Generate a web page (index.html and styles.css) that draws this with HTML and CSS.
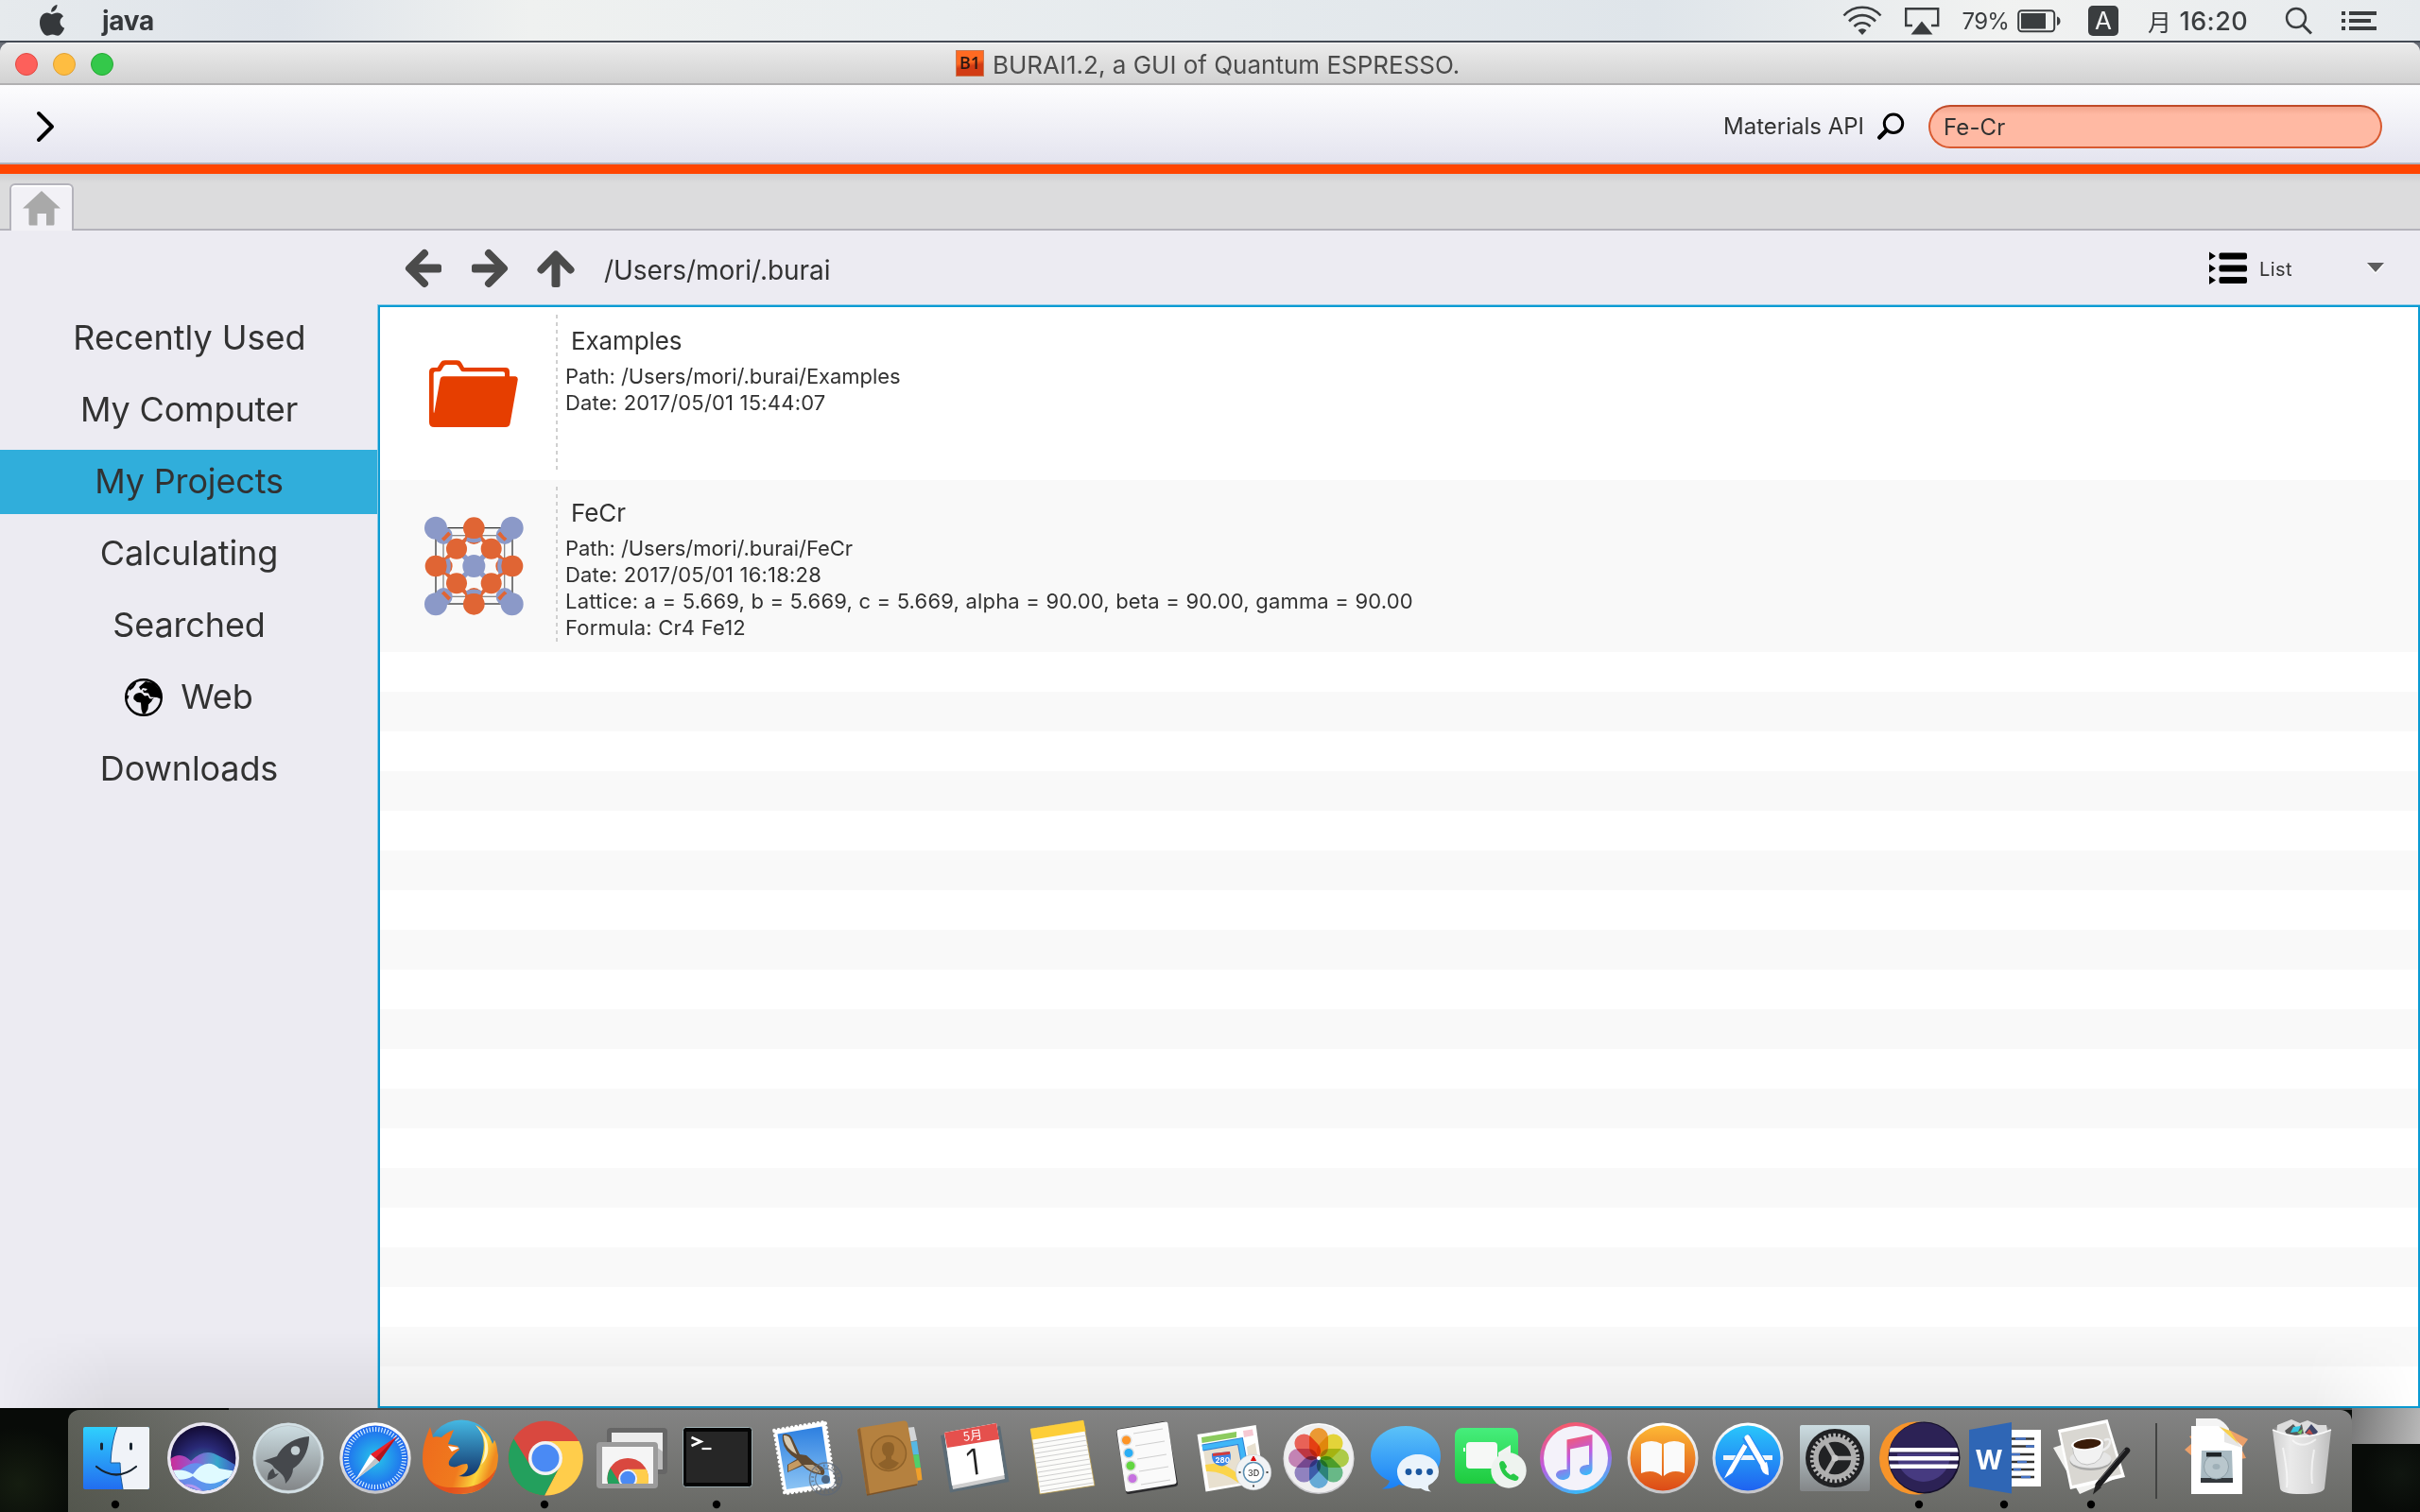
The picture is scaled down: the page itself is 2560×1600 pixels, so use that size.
FILE: index.html
```
<!DOCTYPE html>
<html lang="ja">
<head>
<meta charset="utf-8">
<title>BURAI1.2</title>
<link rel="stylesheet" href="styles.css">
</head>
<body>
<div class="desktop">
  <header class="menubar">
    <svg class="apple" width="28" height="34" viewBox="0 0 28 34"><path fill="#35383b" d="M19.500 1c.3 3.600-2.800 7.800-6.300 7.700C12.800 5.200 16 1.400 19.500 1zM13.700 11.200c1.500 0 3.400-1.700 6.100-1.600 1.900.1 4.500 1 6.200 3.600-5.200 3.300-4.400 10.200 1.200 12.500-1.300 3.400-4.200 8-7 8-2.200 0-3-1.300-5.700-1.300s-3.600 1.300-5.700 1.300C5.400 33.700 1 26.700 1 20.300 1 13.300 5 9.700 8.700 9.600c2.200 0 3.900 1.600 5 1.600z"/></svg>
    <b class="app-name">java</b>
    <div class="status">
      <svg class="wifi" width="42" height="32" viewBox="0 0 42 32"><g fill="none" stroke="#3a3d3f" stroke-width="2.600"><path d="M1.500 10.500C12-1.200 30-1.200 40.500 10.500"/><path d="M7 16.500C15 8 27 8 35 16.500"/><path d="M12.500 22C17.500 17 24.500 17 29.500 22"/></g><path fill="#3a3d3f" d="M21 31l-4.500-5q4.500-3.500 9 0z"/></svg>
      <svg class="airplay" width="38" height="32" viewBox="0 0 38 32"><path fill="none" stroke="#3a3d3f" stroke-width="2.400" d="M9 21H2.200V3.200h34V21H29"/><path fill="#3a3d3f" d="M19 16.500L30.500 30.500H7.500z"/></svg>
      <span class="percent">79%</span>
      <svg class="battery" width="46" height="26" viewBox="0 0 46 26"><rect x="1.200" y="2.200" width="38" height="22" rx="3.500" fill="none" stroke="#3a3d3f" stroke-width="2"/><rect x="4" y="5" width="26" height="16.500" fill="#3a3d3f"/><path fill="#3a3d3f" d="M42 8.500q3.500 1 3.500 4.800T42 18z"/></svg>
      <span class="input-source">A</span>
      <span class="clock"><span class="day">月</span> <span class="time">16:20</span></span>
      <svg class="spotlight" width="30" height="30" viewBox="0 0 30 30"><circle cx="12" cy="12" r="10" fill="none" stroke="#3a3d3f" stroke-width="2.400"/><path d="M19 19.500L28 28.500" stroke="#3a3d3f" stroke-width="3"/></svg>
      <svg class="notif" width="37" height="22" viewBox="0 0 37 22"><path fill="#3a3d3f" d="M0 1h4v4H0zM8 1h29v4H8zM0 9h4v4H0zM8 9h23v4H8zM0 17h4v4H0zM8 17h29v4H8z"/></svg>
    </div>
  </header>

  <main class="window">
    <div class="titlebar">
      <div class="lights"><i class="close"></i><i class="min"></i><i class="max"></i></div>
      <div class="title"><span class="logo">B1</span><span>BURAI1.2, a GUI of Quantum ESPRESSO.</span></div>
    </div>
    <div class="toolbar">
      <svg class="chevron" width="22" height="34" viewBox="0 0 22 34"><path d="M4 3L18 17L4 31" fill="none" stroke="#000" stroke-width="4" stroke-linecap="round" stroke-linejoin="round"/></svg>
      <span class="api">Materials API</span>
      <svg class="mag" width="30" height="30" viewBox="0 0 30 30"><circle cx="18" cy="11.800" r="9.700" fill="none" stroke="#000" stroke-width="3"/><path d="M10.500 19L3.200 26.500" stroke="#000" stroke-width="4.500" stroke-linecap="round"/></svg>
      <div class="search">Fe-Cr</div>
    </div>
    <div class="accent"></div>
    <div class="tabs">
      <div class="tab"><svg width="40" height="38" viewBox="0 0 40 38"><path fill="#a9a9a9" d="M20 0L40 18.500H33.500V35q0 1.500-1.500 1.500H25V24H15.500V36.500H8q-1.500 0-1.500-1.500V18.500H0z"/></svg></div>
    </div>
    <div class="body">
      <nav class="sidebar">
        <div class="item recent">Recently Used</div>
        <div class="item">My Computer</div>
        <div class="item active">My Projects</div>
        <div class="item">Calculating</div>
        <div class="item">Searched</div>
        <div class="item web"><svg width="40" height="40" viewBox="0 0 40 40"><circle cx="20" cy="20" r="18.800" fill="#ecebf2" stroke="#000" stroke-width="2.400"/><path d="M5 10l6-6 1 1.500-3 4.500-4 3zM2 18h2.500l-1 3.500H2zM12 16q4-1.500 6-.5l3 3 3.500-.5 1.500 3 3 2.500-4 4-.5 5-3 5h-2.500l-1.500-5-.5-7-4-.5-3.500-3q-1-4 2.500-6zM15 9l7-6 9 2 7 9 1 8-5-2-7-.500-2-4-5-.5-1-3 3 1 2-2-5-1-2 2.500zM25 21l3 .500 3-1-3 3z"/></svg><span>Web</span></div>
        <div class="item">Downloads</div>
      </nav>
      <section class="explorer">
        <div class="pathbar">
          <svg class="nav" width="40" height="42" viewBox="0 0 40 42"><path d="M21 5L5 21L21 37" fill="none" stroke="#4b4b4b" stroke-width="8" stroke-linecap="round" stroke-linejoin="round"/><rect x="8" y="16.500" width="31" height="9" rx="2.500" fill="#4b4b4b"/></svg>
          <svg class="nav" width="40" height="42" viewBox="0 0 40 42"><path d="M19 5L35 21L19 37" fill="none" stroke="#4b4b4b" stroke-width="8" stroke-linecap="round" stroke-linejoin="round"/><rect x="1" y="16.500" width="31" height="9" rx="2.500" fill="#4b4b4b"/></svg>
          <svg class="nav" width="40" height="42" viewBox="0 0 40 42"><path d="M4.500 22.500L20 6.500L35.500 22.500" fill="none" stroke="#4b4b4b" stroke-width="8" stroke-linecap="round" stroke-linejoin="round"/><rect x="15.500" y="8" width="9" height="33" rx="2.500" fill="#4b4b4b"/></svg>
          <span class="path">/Users/mori/.burai</span>
          <svg class="listicon" width="40" height="36" viewBox="0 0 40 36"><path d="M0 .5l7 4.500-7 4.500zM0 13.500l7 4.500-7 4.500zM0 26l7 4.500-7 4.500z"/><rect x="10.500" y="1.500" width="29.500" height="7" rx="2"/><rect x="10.500" y="14.500" width="29.500" height="7" rx="2"/><rect x="10.500" y="27" width="29.500" height="7" rx="2"/></svg>
          <span class="view">List</span>
          <svg class="caret" width="18" height="12" viewBox="0 0 18 12"><path d="M0 2h18l-9 10z" fill="#fff"/><path d="M0 0h18l-9 10z" fill="#5d5d5f"/></svg>
        </div>
        <div class="list">
          <article class="row">
            <div class="thumb"><svg class="folder" width="98" height="74" viewBox="36 30 294 222"><path fill="#e63e00" d="M56 57H68L78 41Q82 34 92 34H130Q140 34 144 41L153 57H284Q297 57 297 70V85H316Q325 87 323 97L299 233Q297 246 284 246H58Q42 246 42 230V71Q42 57 56 57z"/><path fill="#fff" d="M56 76Q56 70 62 70H72Q78 70 81 65L88 53Q91 48 97 48H126Q132 48 135 53L142 65Q145 70 150 70H276Q282 70 282 76V85H88Q79 85 77 94L58 200Q56 202 56 196z"/></svg></div>
            <div class="info">
              <h3>Examples</h3>
              <p>Path: /Users/mori/.burai/Examples</p>
              <p class="num">Date: 2017/05/01 15:44:07</p>
            </div>
          </article>
          <article class="row alt">
            <div class="thumb"><svg class="mol" width="108" height="108" viewBox="20 525 324 324">
              <rect x="86" y="590" width="194" height="194" fill="none" stroke="#888" stroke-width="4"/>
              <rect x="62" y="566" width="243" height="241" fill="none" stroke="#222" stroke-width="3.500"/>
              <g fill="#8b99c8"><circle cx="87" cy="590" r="28"/><circle cx="281" cy="590" r="28"/><circle cx="87" cy="784" r="28"/><circle cx="281" cy="784" r="28"/></g>
              <g stroke="#e06534" stroke-width="12"><path d="M84 604l22-22M284 604l-22-22M84 770l22 22M284 770l-22 22"/></g>
              <g fill="#e06534"><circle cx="183" cy="590" r="28"/><circle cx="183" cy="784" r="28"/><circle cx="87" cy="687" r="28"/><circle cx="280" cy="687" r="28"/></g>
              <g stroke="#e06534" stroke-width="12"><path d="M128 631l40-40M238 631l-40-40M128 743l40 40M238 743l-40 40M128 631l-40 40M128 743l-40-40M238 631l40 40M238 743l40-40"/></g>
              <g stroke="#8b99c8" stroke-width="13" fill="none"><path d="M160 602q23 8 46 0M160 772q23-8 46 0M99 664q8 23 0 46M268 664q-8 23 0 46"/></g>
              <g stroke="#8b99c8" stroke-width="16"><path d="M148 652l70 70M218 652l-70 70"/></g>
              <g fill="#e06534"><circle cx="183" cy="566" r="34"/><circle cx="183" cy="808" r="34"/><circle cx="62" cy="687" r="34"/><circle cx="305" cy="687" r="34"/><circle cx="128" cy="632" r="33"/><circle cx="238" cy="632" r="33"/><circle cx="128" cy="742" r="33"/><circle cx="238" cy="742" r="33"/></g>
              <g fill="#8b99c8"><circle cx="62" cy="566" r="36"/><circle cx="304" cy="566" r="36"/><circle cx="62" cy="808" r="36"/><circle cx="304" cy="808" r="36"/><circle cx="183" cy="687" r="36"/></g>
            </svg></div>
            <div class="info">
              <h3>FeCr</h3>
              <p>Path: /Users/mori/.burai/FeCr</p>
              <p class="num">Date: 2017/05/01 16:18:28</p>
              <p class="num">Lattice: a = 5.669, b = 5.669, c = 5.669, alpha = 90.00, beta = 90.00, gamma = 90.00</p>
              <p class="num">Formula: Cr4 Fe12</p>
            </div>
          </article>
          <div class="stripes"></div>
        </div>
      </section>
    </div>
  </main>

  <footer class="dock-area">
    <div class="dock">
      <svg width="91" height="108" viewBox="77 22 91 108">
        <defs><linearGradient id="fb" x1="0" y1="0" x2="0" y2="1"><stop offset="0" stop-color="#2fd0fd"/><stop offset="1" stop-color="#226df0"/></linearGradient><linearGradient id="rim" x1="0" y1="0" x2="0" y2="1"><stop offset="0" stop-color="#fff"/><stop offset="1" stop-color="#c4c4c8"/></linearGradient></defs>
        <rect x="88" y="40" width="70" height="66" rx="2" fill="url(#fb)"/><path d="M124 40H156q2 0 2 2V104q0 2-2 2H130Q127 92 127 78H117Q118 55 124 40z" fill="#f0f3f8"/><path d="M124 40Q118 55 117 78H127Q127 92 130 106" fill="none" stroke="#1a5a9a" stroke-width="1"/><path d="M107.500 58v5M138.500 58v5" stroke="#17232e" stroke-width="3" stroke-linecap="round"/><path d="M102 82Q123 99 144 82" fill="none" stroke="#17232e" stroke-width="2.200" stroke-linecap="round"/><circle cx="122" cy="122" r="4.200"/></svg>
      <svg width="91" height="108" viewBox="168 22 91 108">
        <defs><radialGradient id="si" cx=".5" cy=".65" r=".65"><stop offset="0" stop-color="#2b8aa8"/><stop offset=".5" stop-color="#2a2a78"/><stop offset="1" stop-color="#120a32"/></radialGradient><linearGradient id="sw" x1="0" y1="0" x2="1" y2="0"><stop offset="0" stop-color="#f02ca0"/><stop offset=".4" stop-color="#a060e0"/><stop offset=".7" stop-color="#38b8d8"/><stop offset="1" stop-color="#4a60d8"/></linearGradient><clipPath id="sc"><circle cx="215" cy="73" r="34.500"/></clipPath></defs>
        <circle cx="215" cy="73" r="38" fill="#e9e6f0"/><g clip-path="url(#sc)"><circle cx="215" cy="73" r="35" fill="url(#si)"/><path d="M178 76Q190 64 202 76Q214 64 226 68Q240 74 252 82V112H178z" fill="url(#sw)" opacity=".85"/><path d="M178 98Q205 66 222 86T252 98V112H178z" fill="#5a9cf4" opacity=".8"/><path d="M180 87Q192 83 204 90Q218 71 232 84L250 87V92Q240 94 232 98Q218 104 204 92Q192 99 180 93z" fill="#dffaff"/><path d="M190 104Q204 98 214 110" stroke="#e7a0f0" stroke-width="3" fill="none" opacity=".6"/></g></svg>
      <svg width="91" height="108" viewBox="259 22 91 108">
        <defs><linearGradient id="lp" x1="0" y1="0" x2="0" y2="1"><stop offset="0" stop-color="#ccdde2"/><stop offset="1" stop-color="#838688"/></linearGradient></defs>
        <circle cx="305" cy="73" r="37.500" fill="#b9c2c6"/><circle cx="305" cy="73" r="36" fill="none" stroke="#d3e0e5" stroke-width="2.500"/><circle cx="305" cy="73" r="34" fill="url(#lp)"/><path fill="#45484c" d="M327 50C312 51 299 59 293 71L278 76Q288 78 290 83L296 88Q302 93 302 100Q310 92 310 84C321 77 327 64 327 50zM289 84q-6 3-6 12q8-1 12-7l-4 1z"/><circle cx="312.500" cy="65" r="4.800" fill="#c4d0d4"/></svg>
      <svg width="91" height="108" viewBox="350 22 91 108">
        <defs><radialGradient id="sf"><stop offset="0" stop-color="#27c6ea"/><stop offset="1" stop-color="#1f66ee"/></radialGradient></defs>
        <circle cx="397" cy="73" r="37.700" fill="url(#rim)"/><circle cx="397" cy="73" r="34.500" fill="url(#sf)"/><circle cx="397" cy="73" r="30.500" fill="none" stroke="#d5eeff" stroke-width="5" stroke-dasharray="1.200 1.990"/><path d="M420 50L392 69L401 77z" fill="#e8222b"/><path d="M420 50L397 73L401 77z" fill="#b3141c"/><path d="M376 96L392 69L401 77z" fill="#fff"/><path d="M376 96L397 73L401 77z" fill="#bfc4c8"/></svg>
      <svg width="91" height="108" viewBox="441 22 91 108">
        <defs><linearGradient id="fx" x1="0" y1="0" x2="1" y2=".3"><stop offset="0" stop-color="#ee6a1c"/><stop offset=".6" stop-color="#f07a1e"/><stop offset=".85" stop-color="#fbd63c"/><stop offset="1" stop-color="#f08a20"/></linearGradient><linearGradient id="fg" x1="0" y1="0" x2="0" y2="1"><stop offset="0" stop-color="#45b9e4"/><stop offset=".8" stop-color="#14386e"/></linearGradient></defs>
        <circle cx="488" cy="69" r="36.500" fill="url(#fg)"/><path fill="url(#fx)" d="M455 40C450 52 447 60 447 74C447 96 465 111 487 111C510 111 527 96 527 70C526 66 526 58 523 54L521 58C518 48 512 42 503 38C514 50 513 62 509 76C506 90 497 94 485 92C492 90 497 84 494 79C486 79 483 84 478 82C471 80 476 72 486 64L484 60L474 58L480 43C474 45 470 48 467 51C463 50 460 50 458 51z"/><path fill="#e0431c" opacity=".75" d="M450 90C460 106 475 104 490 104C505 103 518 96 525 84C520 102 505 111 487 111C470 111 456 103 450 90z"/><path fill="#fff5c0" d="M503 38C514 50 516 62 509 80C520 70 519 50 503 38z"/><path fill="#fff" d="M474 60l12 2-8 4z"/></svg>
      <svg width="91" height="108" viewBox="532 22 91 108">
        <g id="chrome"><circle cx="577" cy="73" r="39.500" fill="#d9483f"/><path fill="#ffcd4b" d="M577 55H612.500A39.500 39.500 0 0 1 576 112.500L592 82A18 18 0 0 0 577 55z"/><path fill="#23a05d" d="M543.500 52.500A39.500 39.500 0 0 0 576 112.500L592 82A18 18 0 0 1 561 81z"/><circle cx="577" cy="73" r="18" fill="#f3f3f3"/><circle cx="577" cy="73" r="14.500" fill="#4a8af4"/></g><circle cx="576" cy="122" r="4.200"/></svg>
      <svg width="91" height="108" viewBox="623 22 91 108">
        <defs><clipPath id="rc"><rect x="637" y="61" width="54" height="39"/></clipPath></defs>
        <rect x="642" y="41" width="64" height="49" rx="4" fill="#666"/><rect x="647" y="46" width="54" height="39" fill="#ececec"/><path d="M690 58L701 66V85H690z" fill="#bbb"/><rect x="631" y="56" width="65" height="49" rx="4" fill="#9b9b9b"/><rect x="637" y="61" width="54" height="39" fill="#f5f5f5"/><g clip-path="url(#rc)"><use href="#chrome" transform="translate(346.800 54.500) scale(.55)"/></g></svg>
      <svg width="91" height="108" viewBox="714 22 91 108">
        <rect x="722.500" y="40.500" width="73" height="63" rx="3" fill="#050505" stroke="#9fb0b4" stroke-width="1"/><rect x="726" y="45" width="65" height="54" fill="#262626"/><path d="M731.500 51L741.500 55.500L731.500 60" fill="none" stroke="#fff" stroke-width="2.600"/><path d="M742.500 63h10" stroke="#fff" stroke-width="2.200"/><circle cx="758" cy="122" r="4.200"/></svg>
      <svg width="91" height="108" viewBox="805 22 91 108">
        <defs><linearGradient id="ml" x1="0" y1="0" x2="0" y2="1"><stop offset="0" stop-color="#2c7fe0"/><stop offset="1" stop-color="#8cc4f4"/></linearGradient></defs>
        <path d="M819 43.500L873 34.500L883 103L830 110.500z" fill="#fff" stroke="#fff" stroke-width="3.600" stroke-linecap="round" stroke-dasharray=".1 4.600"/><path d="M822.500 47.500L869.500 39.500L878.500 99.500L832 106z" fill="url(#ml)"/><path fill="#5f4a33" d="M828 48Q836 46 839 54L846 69L853 70L862 78Q876 84 871 91Q856 89 849 81L833 88L833 80L843 74Q826 64 828 48z"/><path fill="#d8cbb4" d="M829 49Q835 48 837 55L843 69Q829 62 829 49z"/><path fill="#c59a62" d="M834 80L844 75L848 80L834 87z"/><path fill="#b9a486" d="M850 80L860 80Q870 86 868 89Q856 87 850 80z"/><g fill="none" stroke="#5d6878" opacity=".7"><circle cx="873.500" cy="95" r="17" stroke-width="1.500"/><circle cx="873.500" cy="95" r="11" stroke-width="1.200"/><circle cx="873.500" cy="95" r="14" stroke-width="3" stroke-dasharray="1.500 3"/></g><circle cx="873.500" cy="95.500" r="4.500" fill="#4c6684"/></svg>
      <svg width="91" height="108" viewBox="896 22 91 108">
        <path d="M958 41L967 40L970 54L960 56z" fill="#d4d6d8"/><path d="M960 56L970 55L972 69L962 70z" fill="#56b8e4"/><path d="M962 70L972 69L974 83L964 84z" fill="#50cf6a"/><path d="M964 84L974 83L975.500 96L964 98z" fill="#f0a02a"/><path d="M909 41L956 33.500Q959 33 960 36L971 98Q971 101 969 101L919 112Q917 112 916.500 110L907 43z" fill="#b5813f"/><path d="M907 43L910 41L920 111Q917 113 916.500 110z" fill="#8f6230"/><path d="M917 112L970 101" stroke="#7a5228" stroke-width="1.500"/><circle cx="940" cy="68" r="18.500" fill="#ad7938" stroke="#8e6129" stroke-width="1.500"/><path d="M940 56q6 0 6 7 0 5-3 8l0 3 8 4q-5 7-11 7-7 0-11-6l8-5v-3q-4-3-4-8 0-7 7-7z" fill="#8e6129"/></svg>
      <svg width="91" height="108" viewBox="987 22 91 108">
        <path d="M995 49L1058 39L1067.500 98L1005 109.500z" fill="#5d6c76"/><path d="M999 46L1054 36L1063 95L1008 106z" fill="#cfcfcf"/><path d="M999 46L1054 36L1062.500 91L1007 102z" fill="#fff"/><path d="M999 46L1054 36L1057 53L1002 62z" fill="#e5504d"/><text transform="translate(1019.500 55) rotate(-8)" class="cal-m">5月</text><text transform="translate(1023.500 91.500) rotate(-7)" class="cal-d">1</text></svg>
      <svg width="91" height="108" viewBox="1078 22 91 108">
        <path d="M1090 42L1146 33L1158 102L1100 111z" fill="#fcfcfa" stroke="#b79a4a" stroke-width=".8"/><path d="M1090 42L1146 33L1148.500 44.500L1092 53.500z" fill="#fdce38"/><path d="M1093 58l56-9M1094 63l56-9M1095 68l56-9M1095 73l56-9M1096 78l56-9M1097 83l56-9M1098 88l56-9M1098 93l56-9M1099 98l56-9M1100 103l56-9M1101 108l56-9" stroke="#c9c9c9" stroke-width=".9"/></svg>
      <svg width="91" height="108" viewBox="1169 22 91 108">
        <path d="M1184 45L1232 37L1243 100L1194 108z" fill="#2c2c2e" stroke="#2c2c2e" stroke-width="6" stroke-linejoin="round"/><path d="M1184 45L1233 37L1242 98L1193 106z" fill="#fafafa" stroke="#fafafa" stroke-width="5" stroke-linejoin="round"/><path d="M1199 47l31-5M1201 60l31-5M1203 74l31-5M1205 87l31-5M1207 101l31-5" stroke="#cfcfcf" stroke-width="1"/><g stroke="#ddd" stroke-width="1.500"><circle cx="1191.500" cy="54" r="5.300" fill="#fd9426"/><circle cx="1194" cy="67.500" r="5.300" fill="#2aaef5"/><circle cx="1196" cy="81" r="5.300" fill="#62d640"/><circle cx="1198" cy="94.500" r="5.300" fill="#c672e0"/></g></svg>
      <svg width="91" height="108" viewBox="1260 22 91 108">
        <path d="M1266.500 48L1328.600 38L1337 98L1275.500 108.500z" fill="#fff"/><path d="M1271 51L1308 45V51L1271.500 57z" fill="#8ccb5e"/><path d="M1315 44L1325 42.500L1326 49L1316 51z" fill="#f6c8d2"/><path d="M1273 65L1310 59L1316 99L1279 105z" fill="#e8e0cf"/><path d="M1319 61L1328 57L1334 96L1323 97z" fill="#e8e0cf"/><path d="M1275 80L1290 78Q1300 82 1310 90L1310 99Q1292 86 1276 87z" fill="#fbd44a"/><path d="M1272 62L1312 55L1317 82" fill="none" stroke="#2f7fd0" stroke-width="7"/><path d="M1272 62L1312 55L1317 82" fill="none" stroke="#3fb6f8" stroke-width="5"/><path d="M1282 68L1301 66Q1305 78 1293 81.500Q1281 80 1282 68z" fill="#3c87e8"/><path d="M1283 68L1301 66L1301 69L1283 71z" fill="#d43a3a"/><text x="1285.500" y="78" class="shield">280</text><circle cx="1326" cy="88" r="18.700" fill="#f1f3f5" stroke="#c9ccd0" stroke-width=".6"/><circle cx="1326" cy="88" r="10.500" fill="#fff" stroke="#5d8fb0" stroke-width="1.500"/><path d="M1326 71l2.500 4.500h-5z" fill="#e01010" stroke="#e01010"/><path d="M1310.500 88h2M1339.500 88h2M1326 101.500v2" stroke="#444" stroke-width="2"/><text x="1320" y="91.500" class="threed">3D</text></svg>
      <svg width="91" height="108" viewBox="1351 22 91 108">
        <circle cx="1395" cy="73.500" r="37.500" fill="url(#rim)"/><circle cx="1395" cy="73.500" r="36" fill="#efeff0"/><g class="petals" transform="translate(1395 73)"><rect x="-10" y="-32" width="20" height="31" rx="10" fill="#fba336"/><rect x="-10" y="-32" width="20" height="31" rx="10" fill="#f3e13c" transform="rotate(45)"/><rect x="-10" y="-32" width="20" height="31" rx="10" fill="#b9d94c" transform="rotate(90)"/><rect x="-10" y="-32" width="20" height="31" rx="10" fill="#6fc590" transform="rotate(135)"/><rect x="-10" y="-32" width="20" height="31" rx="10" fill="#6cb6e4" transform="rotate(180)"/><rect x="-10" y="-32" width="20" height="31" rx="10" fill="#9a8bcb" transform="rotate(225)"/><rect x="-10" y="-32" width="20" height="31" rx="10" fill="#d08cbf" transform="rotate(270)"/><rect x="-10" y="-32" width="20" height="31" rx="10" fill="#f8685c" transform="rotate(315)"/></g><circle cx="1395" cy="73" r="2" fill="#fff"/></svg>
      <svg width="91" height="108" viewBox="1442 22 91 108">
        <defs><linearGradient id="ms" x1="0" y1="0" x2="0" y2="1"><stop offset="0" stop-color="#5cc3f8"/><stop offset="1" stop-color="#1a80f6"/></linearGradient></defs>
        <path fill="url(#ms)" d="M1487 39C1508 39 1524 53 1524 71S1508 102 1487 102Q1483 102 1480 101Q1473 106 1462 105.500Q1469 102 1470 97C1458 92 1450 82 1450 71C1450 53 1466 39 1487 39z"/><path fill="#eaf3fb" d="M1500 69C1513 69 1522 77 1522 87.500Q1522 96 1511 102Q1510 106 1514 108.500Q1507 108 1503 105C1488 107 1478 98 1478 87.500C1478 77 1488 69 1500 69z"/><g fill="#1a57a0"><circle cx="1490" cy="87.500" r="3.400"/><circle cx="1501" cy="87.500" r="3.400"/><circle cx="1512.500" cy="87.500" r="3.400"/></g></svg>
      <svg width="91" height="108" viewBox="1533 22 91 108">
        <defs><linearGradient id="ft" x1="0" y1="0" x2="0" y2="1"><stop offset="0" stop-color="#46ee7c"/><stop offset="1" stop-color="#1ecb3e"/></linearGradient></defs>
        <rect x="1539" y="41" width="67" height="59" rx="8" fill="url(#ft)"/><rect x="1551" y="56" width="33" height="28" rx="4" fill="#f6f8f6"/><path d="M1585 67L1598 59V80L1585 74z" fill="#f0f4f0"/><path d="M1549 62v4" stroke="#fff" stroke-width="2"/><circle cx="1596" cy="86" r="18.700" fill="#eef3ef"/><path d="M1586 79q1-4 5-2.500l3 5q0 2-2 3 2 4 6 6.500 2-2 3.500-1.500l5 3.500q0 4-4 4Q1588 94 1586 79z" fill="#27c946"/></svg>
      <svg width="91" height="108" viewBox="1624 22 91 108">
        <defs><linearGradient id="it" x1=".3" y1="0" x2=".6" y2="1"><stop offset="0" stop-color="#fb5a62"/><stop offset=".5" stop-color="#c05ae0"/><stop offset="1" stop-color="#31bffb"/></linearGradient></defs>
        <circle cx="1667" cy="73" r="38" fill="url(#it)"/><circle cx="1667" cy="73" r="34" fill="#f4f2fa"/><path fill="url(#it)" d="M1657.500 53.500L1684.500 48V84C1684.500 89 1681 91 1677 91S1671 88 1671 86C1671 82 1675 80 1681 80V59.500L1661 63.500V89C1661 94 1657 96 1653 96S1646 93 1646 91C1646 87 1650 85 1657.500 85z"/></svg>
      <svg width="91" height="108" viewBox="1715 22 91 108">
        <defs><linearGradient id="ib" x1="0" y1="0" x2="0" y2="1"><stop offset="0" stop-color="#fdb935"/><stop offset="1" stop-color="#dc4a17"/></linearGradient></defs>
        <circle cx="1759" cy="73" r="37.500" fill="url(#rim)"/><circle cx="1759" cy="73" r="34.500" fill="url(#ib)"/><path d="M1736 58Q1747 52 1758 58V92Q1749 84 1736 89zM1760 58Q1771 52 1782 58V89Q1769 84 1760 92z" fill="#fafafa"/></svg>
      <svg width="91" height="108" viewBox="1806 22 91 108">
        <defs><linearGradient id="as" x1="0" y1="0" x2="0" y2="1"><stop offset="0" stop-color="#29c6fb"/><stop offset="1" stop-color="#1f62f0"/></linearGradient></defs>
        <circle cx="1849" cy="73" r="37.500" fill="url(#rim)"/><circle cx="1849" cy="73" r="34.500" fill="url(#as)"/><path d="M1823 70H1875V75H1823z" fill="#eef4fa"/><path d="M1844.500 59L1829 86L1826 92L1832 88L1847.500 61z" fill="#fff" stroke="#2a86f4" stroke-width="3"/><path d="M1844.500 59L1829 86L1826 92L1832 88L1847.500 61z" fill="#fff" stroke="#fff" stroke-width="1.500"/><path d="M1847 50L1866 82" stroke="#2a86f4" stroke-width="9"/><path d="M1848.500 51.500L1864 78" stroke="#fff" stroke-width="6" stroke-linecap="round"/><path d="M1862 80L1869 77Q1871 84 1871 91Q1863 90 1862 80z" fill="#fff"/></svg>
      <svg width="91" height="108" viewBox="1897 22 91 108">
        <rect x="1904" y="38" width="74" height="70" rx="2" fill="url(#lp)"/><circle cx="1941" cy="73" r="31" fill="#212224"/><circle cx="1941" cy="73" r="24" fill="none" stroke="#b9b9b9" stroke-width="4.500" stroke-dasharray="2.600 2.430"/><circle cx="1941" cy="73" r="20" fill="none" stroke="#aeaeae" stroke-width="5.500"/><path d="M1941 73H1961M1941 73L1931 55.700M1941 73L1931 90.300" stroke="#b0b0b0" stroke-width="4.500"/><circle cx="1941" cy="73" r="3.500" fill="#c9c9c9"/></svg>
      <svg width="91" height="108" viewBox="1988 22 91 108">
        <defs><clipPath id="ec"><circle cx="2035" cy="72.500" r="37"/></clipPath></defs>
        <ellipse cx="2026" cy="73" rx="38" ry="38.500" fill="#f7942a"/><circle cx="2035.500" cy="72.500" r="38" fill="#15102c"/><circle cx="2035" cy="72.500" r="36.500" fill="#2c2255"/><g clip-path="url(#ec)"><circle cx="2035" cy="70" r="28" fill="#463a80"/><path d="M1990 34h90v34h-90z" fill="#2c2255"/><path d="M1997 62h76v4.500h-76zM1997 71h76v4.500h-76zM1997 79.500h76v4.500h-76z" fill="#fff"/></g><circle cx="2030" cy="122" r="4.200"/></svg>
      <svg width="91" height="108" viewBox="2079 22 91 108">
        <rect x="2120" y="43" width="39" height="60" fill="#fff"/><path d="M2128 52.500h24M2128 69h24M2128 85h24M2128 60.500h24M2128 77h24M2128 93h24" stroke="#333" stroke-width="2.600"/><path d="M2132 52.500h11M2143 60.500h9M2128 69h9M2134 77h10M2130 85h8M2138 93h10" stroke="#4472c4" stroke-width="2.600"/><path d="M2083 43L2128 35V110.500L2083 103z" fill="#2f66b5"/><text x="2089.500" y="85" class="word">W</text><circle cx="2120" cy="122" r="4.200"/></svg>
      <svg width="91" height="108" viewBox="2170 22 91 108">
        <path d="M2172 62L2230 42L2244 92L2200 111z" fill="#f2f2f0"/><path d="M2177 43L2229.500 32L2248 93L2190 106z" fill="#fff"/><path d="M2180 46L2228 36L2244 90L2192 102z" fill="#d9d7d2"/><ellipse cx="2211.500" cy="76" rx="22" ry="10" fill="#a9a9a8"/><ellipse cx="2211.500" cy="74" rx="22" ry="9.500" fill="#e6e6e6"/><path d="M2192 60Q2194 80 2208 80Q2226 79 2226 56z" fill="#f2f2f2" stroke="#b5b5b5" stroke-width=".8"/><path d="M2226 54q7-3 6 3-2 6-9 8" fill="none" stroke="#eee" stroke-width="2.400"/><ellipse cx="2208" cy="58" rx="17" ry="6.500" fill="#fff" transform="rotate(-6 2208 58)"/><ellipse cx="2208" cy="58" rx="14.500" ry="5" fill="#3a1c0a" transform="rotate(-6 2208 58)"/><path d="M2250 65L2220 101" stroke="#1b1b1d" stroke-width="6.500" stroke-linecap="round"/><path d="M2217 100L2223 104L2214 111.500z" fill="#222"/><path d="M2248 64L2221 96" stroke="#6a6a6c" stroke-width="1"/><circle cx="2212" cy="122" r="4.200"/></svg>
      <svg width="39" height="108" viewBox="2261 22 39 108"><path d="M2281 36v80" stroke="#424342" stroke-width="2"/></svg>
      <svg width="91" height="108" viewBox="2300 22 91 108">
        <path d="M2311 64L2318 58V70zM2316 50l3-1v5zM2352 40L2378 53L2371 63L2376 73L2370 74L2360 60z" fill="#eba06a"/><path d="M2323 31H2345Q2352 33 2358 42V100H2323z" fill="#f4f4f4"/><path d="M2318 39H2347L2372 60V111H2318z" fill="#fff"/><path d="M2347 39L2353 41L2369 58L2372 62L2353 56V45z" fill="#e6e6e6"/><path d="M2348 40L2359 44L2368 58z" fill="#f8cf4c"/><path d="M2329 65H2361L2362 96H2328z" fill="#a9bac2"/><path d="M2328 94H2362V99H2328z" fill="#33383c"/><circle cx="2344.500" cy="82" r="13" fill="#b9c7cd" stroke="#8fa0a8"/><ellipse cx="2344.500" cy="82" rx="4" ry="3" fill="#9fb0b8"/><rect x="2334" y="67" width="16" height="4.500" fill="#1f2427"/></svg>
      <svg width="91" height="108" viewBox="2391 22 91 108">
        <defs><linearGradient id="tr" x1="0" y1="0" x2="1" y2="0"><stop offset="0" stop-color="#cfcfcf"/><stop offset=".3" stop-color="#eaeaea"/><stop offset=".7" stop-color="#dadada"/><stop offset="1" stop-color="#bdbdbd"/></linearGradient></defs>
        <ellipse cx="2435" cy="43" rx="30" ry="7" fill="#8a8a8a"/><path d="M2409 38L2424 32L2433 36L2441 33L2452 38L2461 38L2463 50H2408z" fill="#dcdcdc"/><path d="M2417 44l9-7 4 5 5-5 2 10-16 4z" fill="#575757"/><path d="M2426 40l8-1-3 6-8 1z" fill="#35c6e0"/><path d="M2430 46l6-4-2 6z" fill="#6cc86a"/><path d="M2438 46l7-9 7 8-5 6z" fill="#3f4668"/><path d="M2439 47l4-5 4 6z" fill="#c2504a"/><path d="M2404 43Q2420 50 2435 50T2466 43L2459 105Q2457 111 2435 111T2412 105z" fill="url(#tr)"/><path d="M2404 43Q2420 50 2435 50T2466 43" fill="none" stroke="#fafafa" stroke-width="1.500"/><path d="M2425 54q10 10 25-1M2415 62q6 30 4 42M2448 64q-4 20-2 36" fill="none" stroke="#fff" stroke-width="2" opacity=".6"/></svg>
    </div>
    <div class="behind"></div>
  </footer>
  <div class="dock-shadow"></div>
</div>
</body>
</html>
```
FILE: styles.css
```
* { box-sizing: border-box; }
body {
  margin: 0;
  font-family: Inter, "Noto Sans CJK JP", sans-serif;
  color: #323232;
}
svg { display: block; flex: none; overflow: visible; }
.desktop {
  position: relative;
  width: 2560px;
  height: 1600px;
  overflow: hidden;
  display: flex;
  flex-direction: column;
  background: #6b6f77;
}

/* menu bar */
.menubar {
  height: 45px;
  flex: none;
  display: flex;
  align-items: center;
  padding: 1px 46px 0 41px;
  background: linear-gradient(90deg, #e6eaed 0, #dfe4ea 300px, #eff1f0 560px, #e9edef 1000px, #dfe5ea 1750px, #f1f2f1 2120px, #e6eaed 2560px);
  border-bottom: 2px solid #454b55;
}
.apple { margin-top: -3px; }
.app-name { font-size: 28px; font-weight: 700; letter-spacing: -.3px; line-height: 44px; margin-left: 39px; color: #35383b; }
.status { margin-left: auto; display: flex; align-items: center; color: #3a3d3f; }
.airplay { margin-left: 23px; }
.percent { font-size: 24px; letter-spacing: -.8px; margin-left: 24px; }
.battery { margin-left: 9px; }
.input-source {
  margin-left: 29px;
  width: 32px;
  height: 32px;
  border-radius: 5px;
  background: #3a3d3f;
  color: #f2f3f3;
  font-size: 26px;
  line-height: 32px;
  text-align: center;
}
.clock { margin-left: 31px; width: 106px; display: flex; justify-content: space-between; align-items: center; }
.day { font: 25px/40px "Noto Sans CJK JP", sans-serif; }
.time { font-size: 27px; font-weight: 500; letter-spacing: .4px; }
.spotlight { margin-left: 39px; }
.notif { margin-left: 30px; }

/* window */
.window { height: 1445px; flex: none; display: flex; flex-direction: column; background: #ecebf2; border-radius: 10px 10px 0 0; overflow: hidden; }
.titlebar {
  height: 45px;
  flex: none;
  display: grid;
  grid-template-columns: 1011px 1fr;
  align-items: center;
  background: linear-gradient(#ececec, #d2d2d2);
  border-bottom: 2px solid #b1b0b1;
  box-shadow: inset 0 1px #f8f8f8;
}
.lights { display: flex; gap: 16px; padding: 2px 0 0 16px; }
.lights i { width: 24px; height: 24px; border-radius: 50%; border: 1px solid #e14942; background: #fd605b; }
.lights .min { background: #febd41; border-color: #dfa033; }
.lights .max { background: #34c84a; border-color: #25a933; }
.title { display: flex; align-items: center; font-size: 26px; line-height: 32px; color: #4b4b4b; padding-top: 5px; }
.logo {
  width: 30px;
  height: 28px;
  margin: -5px 9px 0 0;
  background: linear-gradient(170deg, #ff6a22 45%, #d23c14 60%);
  border: 1px solid #c97a55;
  color: #2b1712;
  font: 600 18px/25px "Open Sans", sans-serif;
  text-align: center;
}
.toolbar {
  height: 84px;
  flex: none;
  display: flex;
  align-items: center;
  padding: 5px 40px 0 37px;
  background: linear-gradient(#fdfdfe, #e4e4ef);
  border-bottom: 2px solid #b0b0ba;
}
.api { margin-left: auto; font-size: 24px; letter-spacing: 0; color: #323232; }
.mag { margin-left: 13px; }
.search {
  width: 480px;
  height: 46px;
  margin-left: 25px;
  padding-left: 14px;
  border: 2px solid #d85a30;
  border-top-color: #c04a28;
  border-radius: 23px;
  background: linear-gradient(#f2a48c, #ffb9a3 8px);
  font-size: 24px;
  line-height: 43px;
  letter-spacing: .1px;
}
.accent { height: 10px; flex: none; background: #ff4500; }
.tabs {
  height: 60px;
  flex: none;
  display: flex;
  align-items: flex-end;
  padding-left: 10px;
  background: linear-gradient(#cfcfd0, #dcdcdd 10px);
  border-bottom: 2px solid #b4b3bb;
}
.tab {
  width: 68px;
  height: 50px;
  margin-bottom: -2px;
  padding: 6px 12px;
  border: 2px solid #b4b3bb;
  border-bottom: 0;
  border-radius: 6px 6px 0 0;
  background: #f2f1f6;
  box-shadow: inset 0 2px #fff;
}
.body { flex: 1; min-height: 0; display: grid; grid-template-columns: 400px 1fr; }

/* sidebar */
.sidebar { display: flex; flex-direction: column; gap: 8px; padding-top: 80px; }
.item { height: 68px; width: 400px; display: flex; align-items: center; justify-content: center; font-size: 36px; letter-spacing: -.14px; line-height: 66px; padding-bottom: 2px; }
.recent { letter-spacing: 0; padding-left: 1px; }
.active { background: #30aedb; }
.web { gap: 19px; }
.web svg { margin-top: 2px; }

/* explorer */
.explorer { display: flex; flex-direction: column; }
.pathbar { height: 79px; flex: none; display: flex; align-items: center; padding: 1px 38px 0 28px; }
.nav { margin-right: 30px; }
.path { font-size: 28px; line-height: 40px; padding-top: 3px; margin-left: 1px; letter-spacing: -.05px; }
.listicon { margin-left: auto; }
.view { font-size: 20px; letter-spacing: .4px; width: 114px; margin-left: 13px; padding-top: 2px; }
.list { flex: 1; border: 2px solid #0a9bd3; box-shadow: 0 0 0 1px #8ccbe6; background: #fff; display: flex; flex-direction: column; }
.row { height: 182px; flex: none; display: grid; grid-template-columns: 188px 1fr; background: #fff; }
.row:first-child { height: 183px; padding-top: 1px; }
.alt { background: #f9f9f9; }
.thumb {
  background: repeating-linear-gradient(#d0d0d0 0 4px, transparent 4px 8px) right 7px / 2px 164px no-repeat;
}
.folder { margin: 54px 0 0 50px; }
.mol { margin: 37px 0 0 45px; }
.info { padding: 12px 0 0 8px; }
.info h3 { margin: 0 0 0 6px; font-size: 26px; font-weight: 400; letter-spacing: -.1px; line-height: 46px; }
.info p { margin: 0; font-size: 22px; line-height: 28px; letter-spacing: -.04px; }
.info .num { letter-spacing: .19px; }
.stripes { flex: 1; background: repeating-linear-gradient(#fff 0 42px, #f9f9f9 42px 84px); }

/* dock */
.dock-area {
  height: 110px;
  flex: none;
  display: flex;
  padding: 2px 0 0 72px;
  background:
    linear-gradient(90deg, #030503 242px, #4b4b4a 242px) 0 0 / 2488px 2px no-repeat,
    radial-gradient(circle at 20px 80px, #151d10, transparent 60px),
    radial-gradient(circle at 2540px 70px, #101610, transparent 40px),
    #080b08;
}
.dock {
  width: 2416px;
  display: flex;
  padding-left: 5px;
  border-radius: 12px 12px 0 0;
  background: linear-gradient(90deg, rgba(70,74,62,.6), rgba(100,100,100,0) 330px), linear-gradient(#838383, #686965);
}
.behind { width: 72px; height: 38px; margin-top: -2px; background: linear-gradient(100deg, #777, #b9b9b9); }
.dock-shadow {
  position: absolute;
  left: 0;
  top: 1410px;
  width: 2560px;
  height: 80px;
  background: linear-gradient(rgba(0,0,0,0), rgba(0,0,0,.075));
  -webkit-mask: linear-gradient(90deg, transparent, #000 120px 2440px, transparent);
  mask: linear-gradient(90deg, transparent, #000 120px 2440px, transparent);
}
.cal-m { font: 13px "Noto Sans CJK JP", sans-serif; fill: #fff; }
.cal-d { font: 300 38px Inter, sans-serif; fill: #222; }
.shield { font: 700 8px Inter, sans-serif; fill: #fff; }
.threed { font: 500 9px Inter, sans-serif; fill: #333; }
.word { font: 700 28px Inter, sans-serif; fill: #fff; }
.petals rect { mix-blend-mode: multiply; }
```
